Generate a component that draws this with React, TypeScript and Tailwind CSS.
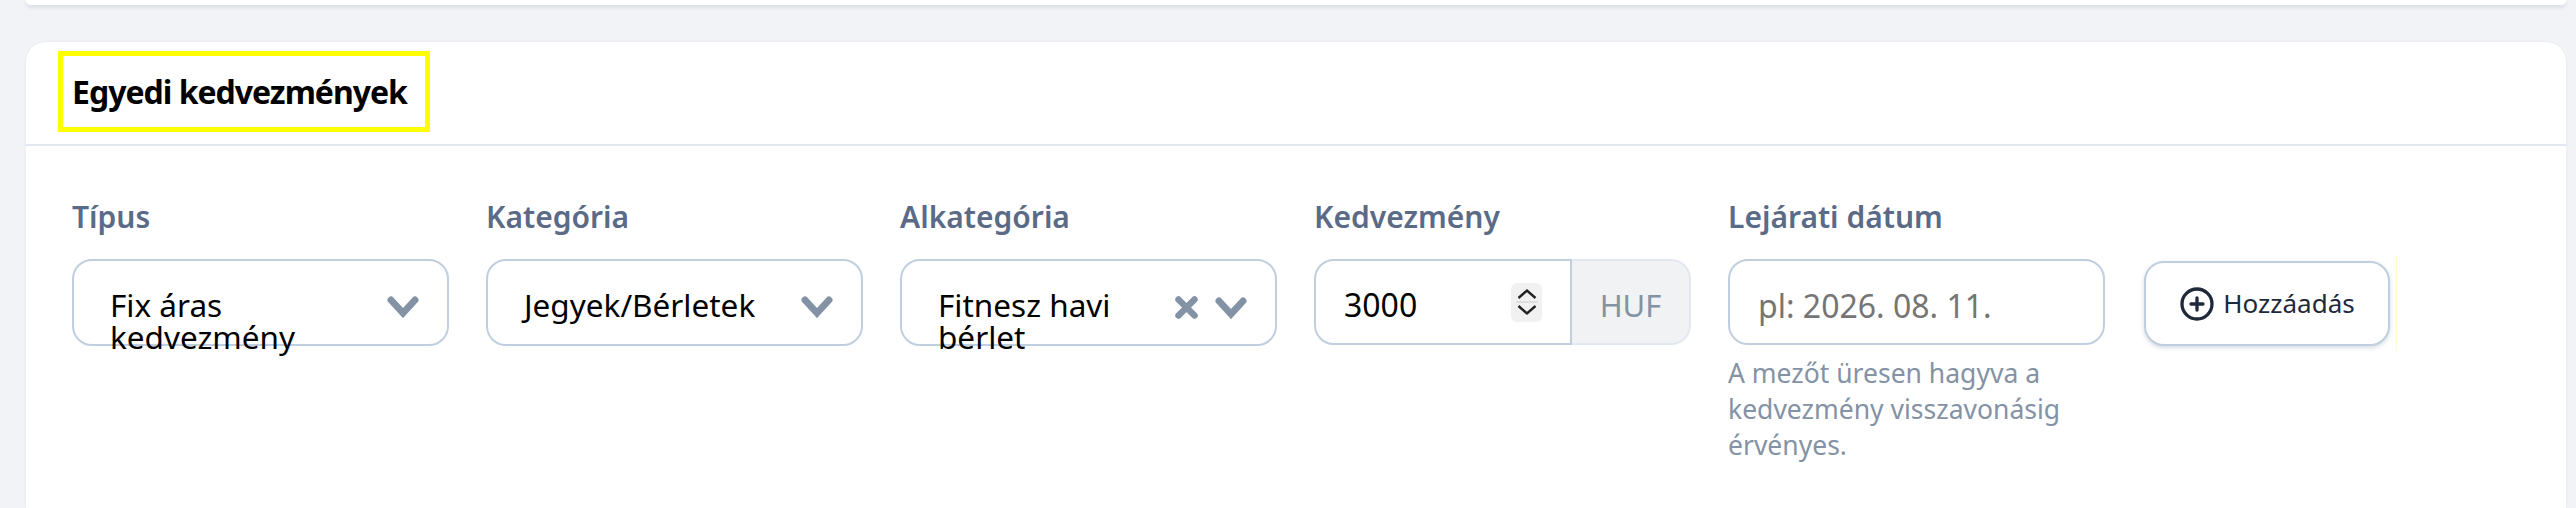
import React from 'react';
import { CirclePlus } from 'lucide-react';

const font = { fontFamily: '"Noto Sans", "Open Sans", sans-serif' };

const ChevronDown = () => (
  <svg width="32" height="22" viewBox="0 0 32 22" className="shrink-0">
    <path d="M4 4 L16 17 L28 4" fill="none" stroke="#8492a6" strokeWidth="7" strokeLinecap="round" strokeLinejoin="miter" />
  </svg>
);

const Cross = () => (
  <svg width="23" height="23" viewBox="0 0 23 23" className="shrink-0">
    <path d="M3.5 3.5 L19.5 19.5 M19.5 3.5 L3.5 19.5" fill="none" stroke="#8492a6" strokeWidth="6.5" strokeLinecap="round" />
  </svg>
);

const Label: React.FC<{ text: string }> = ({ text }) => (
  <label className="block h-[40px] mb-[22px] whitespace-nowrap text-[30px] leading-[40px] font-semibold text-[#5a6a87]">{text}</label>
);

const SelectBox: React.FC<{ value: string; clearable?: boolean }> = ({ value, clearable }) => (
  <div className="flex h-[87px] w-[377px] items-start rounded-[20px] border-2 border-[#c0cfe0] bg-white pl-[36px] pr-[28px]">
    <div className="min-w-0 flex-1 pt-[28px] text-[31.5px] leading-[32px] text-black">{value}</div>
    <div className="flex items-center gap-[17px] pt-[35px]">
      {clearable && <Cross />}
      <ChevronDown />
    </div>
  </div>
);

export default function App() {
  return (
    <div className="h-[508px] overflow-hidden bg-[#f1f3f7]" style={font}>
      {/* previous card, only its bottom edge shows */}
      <div className="ml-[26px] mr-[10px] h-[5px] rounded-b-[20px] bg-white shadow-[0_2px_4px_rgba(100,116,139,0.2)]" />

      <div className="ml-[26px] mr-[10px] mt-[37px] h-[466px] rounded-t-[20px] bg-white shadow-[0_0_3px_rgba(100,116,139,0.1)]">
        <div className="h-[104px] border-b-2 border-[#e2e8f0] pl-[32px] pt-[9px]">
          <div className="flex h-[81px] w-[372px] items-center whitespace-nowrap border-[5px] border-[#ffff00] pl-[9px] text-[32px] font-bold tracking-[-1px] text-black">
            Egyedi kedvezmények
          </div>
        </div>

        <div className="flex items-start gap-[37px] pl-[46px] pt-[51px]">
          <div>
            <Label text="Típus" />
            <SelectBox value="Fix áras kedvezmény" />
          </div>
          <div>
            <Label text="Kategória" />
            <SelectBox value="Jegyek/Bérletek" />
          </div>
          <div>
            <Label text="Alkategória" />
            <SelectBox value="Fitnesz havi bérlet" clearable />
          </div>
          <div>
            <Label text="Kedvezmény" />
            <div className="flex h-[86px] w-[377px]">
              <div className="flex w-[258px] items-center rounded-l-[20px] border-2 border-[#c0cfe0] bg-white pl-[28px] pr-[28px]">
                <span className="flex-1 pt-[6px] text-[32px] text-black">3000</span>
                <div className="flex h-[39px] w-[31px] flex-col items-center justify-center gap-[1px] rounded-[6px] bg-[#f1f1f1]">
                  <svg width="20" height="12" viewBox="0 0 20 12"><path d="M1.5 10 L10 2.5 L18.5 10" fill="none" stroke="#222" strokeWidth="2.4" /></svg>
                  <div className="h-[2px] w-[22px] bg-[#dddddd]" />
                  <svg width="20" height="12" viewBox="0 0 20 12"><path d="M1.5 2 L10 9.5 L18.5 2" fill="none" stroke="#222" strokeWidth="2.4" /></svg>
                </div>
              </div>
              <div className="flex flex-1 items-center justify-center rounded-r-[20px] border-2 border-l-0 border-[#e2e8f0] bg-[#f1f2f3] pt-[6px] text-[31px] text-[#8492a6]">
                HUF
              </div>
            </div>
          </div>
          <div className="w-[377px]">
            <Label text="Lejárati dátum" />
            <input
              placeholder="pl: 2026. 08. 11."
              className="h-[86px] w-full rounded-[20px] border-2 border-[#c0cfe0] bg-white pl-[28px] pt-[6px] text-[32px] outline-none placeholder:text-[#757575]"
            />
            <p className="mt-[10px] whitespace-nowrap text-[26.5px] leading-[36px] text-[#8492a6]">
              A mezőt üresen hagyva a<br />kedvezmény visszavonásig<br />érvényes.
            </p>
          </div>
          <div className="relative ml-[2px] mt-[64px]">
            <button className="flex h-[85px] w-[246px] items-center justify-center gap-[8px] rounded-[20px] border-2 border-[#c0cfe0] bg-white text-[26px] text-[#1e293b] shadow-[0_2px_4px_rgba(100,116,139,0.25)]">
              <CirclePlus size={36} strokeWidth={2.2} color="#1e293b" />
              Hozzáadás
            </button>
            {/* faint highlight edge next to the button */}
            <div className="absolute -top-[6px] left-[252px] h-[95px] w-[1px] bg-[#fffbd0]" />
          </div>
        </div>
      </div>
    </div>
  );
}
